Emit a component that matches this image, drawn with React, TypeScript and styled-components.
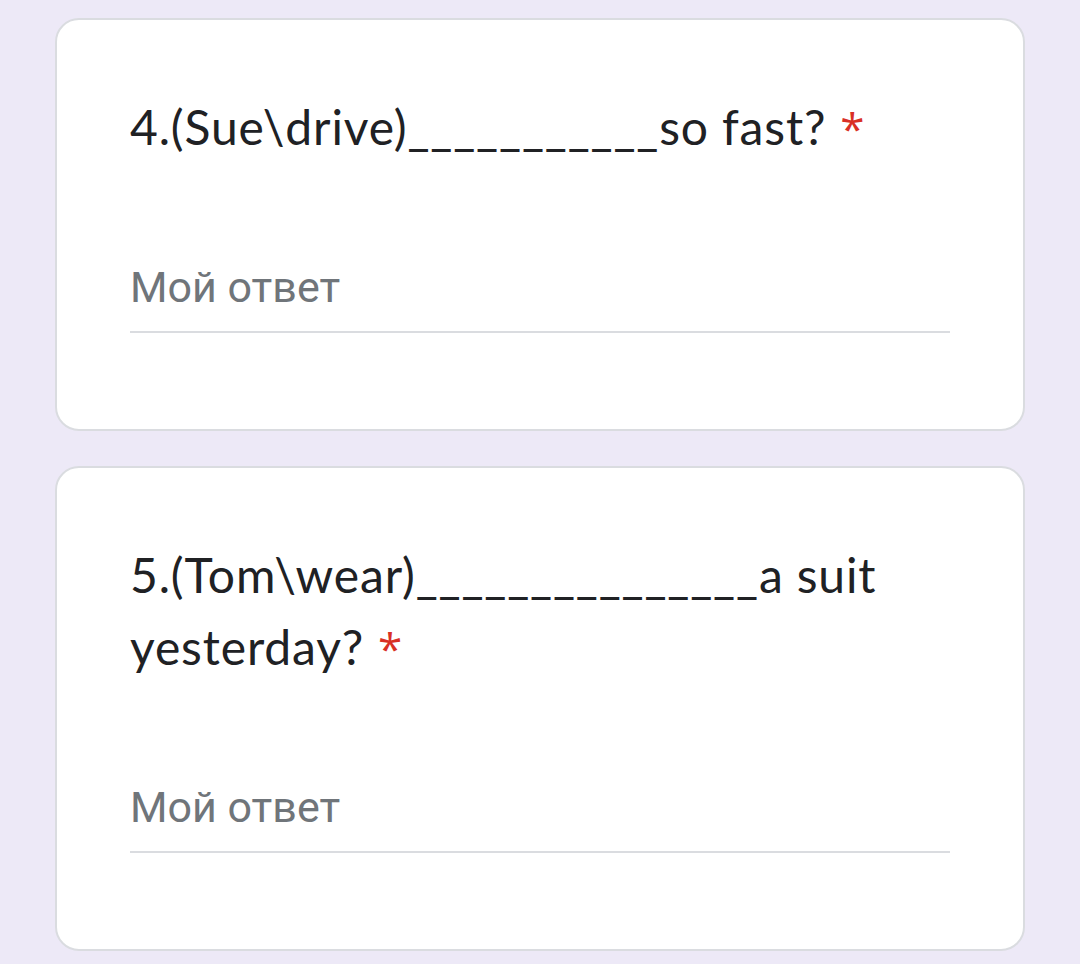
import React from 'react';
import styled, { createGlobalStyle } from 'styled-components';

const GlobalStyle = createGlobalStyle`
  html, body {
    margin: 0;
    padding: 0;
    background: #ede9f7;
  }
`;

interface QuestionProps {
  title: string;
  placeholder?: string;
}

const Question = ({ title, placeholder = 'Мой ответ' }: QuestionProps) => {
  return (
    <Card>
      <Title>
        {title}
        <Required>*</Required>
      </Title>
      <AnswerField placeholder={placeholder} />
    </Card>
  );
};

const App = () => {
  return (
    <Page>
      <GlobalStyle />
      <Question title="4.(Sue\drive)___________so fast?" />
      <Question title="5.(Tom\wear)_______________a suit yesterday?" />
    </Page>
  );
};

export default App;

const Page = styled.div`
  width: 1080px;
  height: 964px;
  overflow: hidden;
  box-sizing: border-box;
  padding: 18px 55px 0 55px;
  display: flex;
  flex-direction: column;
  gap: 35px;
`;

const Card = styled.div`
  background: #ffffff;
  border: 2px solid #dadce0;
  border-radius: 24px;
  padding: 71px 73px 96px 73px;
  display: flex;
  flex-direction: column;
  gap: 98px;
`;

const Title = styled.div`
  font-family: Lato, 'Noto Sans', sans-serif;
  font-size: 48px;
  line-height: 72px;
  letter-spacing: 0.85px;
  color: #202124;
`;

const Required = styled.span`
  font-family: 'Open Sans', sans-serif;
  font-size: 44px;
  color: #d93025;
  margin-left: 14px;
`;

const AnswerField = styled.input`
  font-family: Roboto, 'Noto Sans', sans-serif;
  font-size: 43px;
  line-height: 50px;
  height: 50px;
  color: #202124;
  border: none;
  border-bottom: 2px solid #dadce0;
  outline: none;
  padding: 0 0 19px 0;
  background: transparent;
  width: 100%;
  &::placeholder {
    color: #70757a;
  }
`;
